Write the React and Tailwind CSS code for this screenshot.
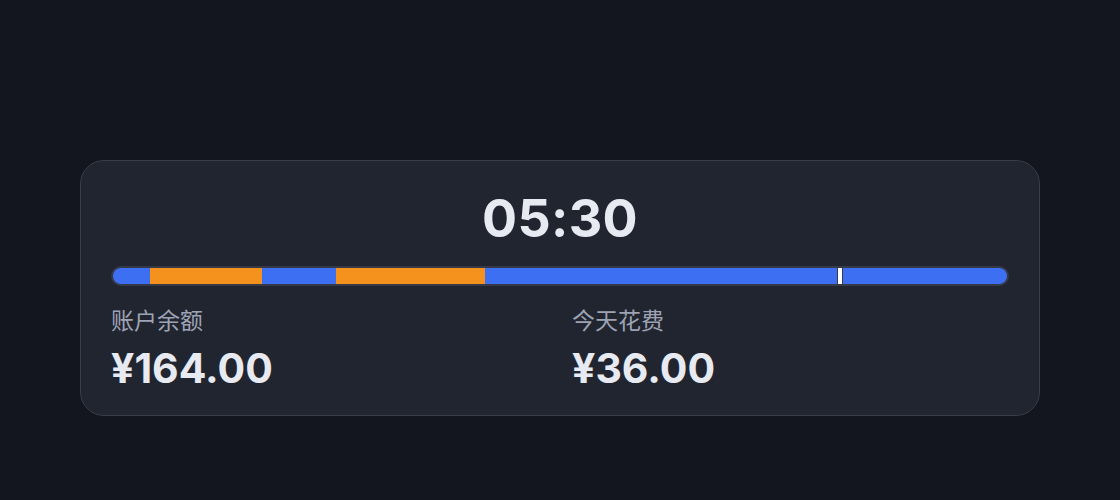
import React from 'react';

const segments = [
  { from: 0, to: 37, color: 'bg-[#3d6ff3]' },
  { from: 37, to: 149, color: 'bg-[#f5921e]' },
  { from: 149, to: 224, color: 'bg-[#3d6ff3]' },
  { from: 224, to: 373, color: 'bg-[#f5921e]' },
  { from: 373, to: 896, color: 'bg-[#3d6ff3]' },
];

const TOTAL = 896;

export default function App() {
  return (
    <div
      className="w-[1120px] h-[500px] bg-[#13161e] flex justify-center pt-[160px]"
      style={{ fontFamily: 'Inter, "Noto Sans CJK SC", sans-serif' }}
    >
      <div className="w-[960px] h-[256px] rounded-[24px] border border-[#393d4a] bg-[#212530] px-[30px] pt-[26px]">
        <div className="text-center text-[52px] leading-[64px] font-bold text-[#e8eaf2] tracking-[0.3px]">
          05:30
        </div>

        {/* progress bar */}
        <div className="mt-[15px] h-[20px] rounded-full border-2 border-[#353948] bg-[#353948] relative overflow-hidden flex">
          {segments.map((s, i) => (
            <div
              key={i}
              className={`h-full ${s.color}`}
              style={{ width: `${((s.to - s.from) / TOTAL) * 100}%` }}
            />
          ))}
          <div className="absolute top-0 bottom-0 left-[724px] w-[6px] bg-[#353948] flex justify-center">
            <div className="w-[4px] h-full bg-white" />
          </div>
        </div>

        <div className="mt-[20px] grid grid-cols-2 gap-6">
          <div>
            <div className="text-[23px] leading-[30px] text-[#9ea3b3]">账户余额</div>
            <div className="mt-[8px] text-[41px] leading-[48px] font-bold text-[#e8eaf2]">¥164.00</div>
          </div>
          <div>
            <div className="text-[23px] leading-[30px] text-[#9ea3b3]">今天花费</div>
            <div className="mt-[8px] text-[41px] leading-[48px] font-bold text-[#e8eaf2]">¥36.00</div>
          </div>
        </div>
      </div>
    </div>
  );
}
